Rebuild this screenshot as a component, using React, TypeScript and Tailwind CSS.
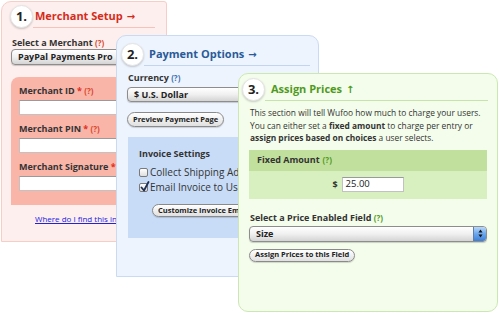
import React from 'react';

function StepHeader({ n, title, arrow, titleClass, lineClass, gapClass }: { n: string; title: string; arrow: string; titleClass: string; lineClass: string; gapClass: string }) {
  return (
    <div className="flex items-start">
      <div className="w-[23px] h-[23px] shrink-0 rounded-full bg-white border border-[#e4e4e4] shadow-[0_1px_2px_rgba(0,0,0,0.18)] flex items-center justify-center text-[13px] font-bold text-[#222] leading-none z-[1]">
        {n}.
      </div>
      <div className={`flex-1 h-[23px] border-b flex items-center text-[11px] font-bold whitespace-nowrap ${gapClass} ${lineClass} ${titleClass}`}>
        {title}
        <span className="ml-[4px] font-['DejaVu_Sans',sans-serif] text-[10px]">{arrow}</span>
      </div>
    </div>
  );
}

function Select({ label, className }: { label: string; className: string }) {
  return (
    <div className={`flex items-center rounded-[4px] border border-[#8d8d8d] bg-linear-to-b from-white via-[#f0f0f0] to-[#d4d4d4] shadow-[0_1px_1px_rgba(0,0,0,0.18)] pl-[6px] text-[9px] font-bold text-[#222] whitespace-nowrap overflow-hidden ${className}`}>
      {label}
    </div>
  );
}

function Button({ label, className }: { label: string; className: string }) {
  return (
    <div className={`flex w-fit items-center rounded-full border border-[#8a8a8a] bg-linear-to-b from-white to-[#e0e0e0] px-[5px] text-[7.5px] font-bold text-[#222] whitespace-nowrap shadow-[0_1px_1px_rgba(0,0,0,0.15)] ${className}`}>
      {label}
    </div>
  );
}

function Input({ className }: { className: string }) {
  return <div className={`bg-white border border-[#c2c2c2] border-t-[#9a9a9a] ${className}`} />;
}

function Check({ checked }: { checked?: boolean }) {
  return (
    <span className="relative w-[9px] h-[9px] shrink-0 rounded-[2px] border border-[#7a7a7a] bg-linear-to-b from-white to-[#dedede]">
      {checked && (
        <svg className="absolute left-[0px] top-[-3px]" width="10" height="11" viewBox="0 0 10 11">
          <path d="M1.5 6.5 L4 9.5 L8.5 1" fill="none" stroke="#1f2f55" strokeWidth="1.8" strokeLinecap="round" strokeLinejoin="round" />
        </svg>
      )}
    </span>
  );
}

export default function App() {
  return (
    <div className="relative w-[499px] h-[313px] overflow-hidden bg-white font-['Open_Sans',sans-serif] text-[#333]">
      {/* 1. Merchant Setup */}
      <div className="absolute left-[1px] top-[1px] w-[166px] h-[241px] rounded-tl-[10px] rounded-tr-[3px] border border-[#f8cdc6] bg-[#fdefed]">
        <div className="ml-[8px] mr-[11px] mt-[3px]">
          <StepHeader n="1" title="Merchant Setup" arrow="→" titleClass="text-[#d42c1c]" lineClass="border-[#f5c3ba]" gapClass="pl-[2px]" />
        </div>
        <div className="px-[9px]">
          <p className="mt-[9px] pl-[1px] h-[11px] leading-[11px] text-[9px] font-bold text-[#333] whitespace-nowrap">
            Select a Merchant <span className="text-[#d8472b] text-[8px]">(?)</span>
          </p>
          <Select label="PayPal Payments Pro" className="mt-[1px] h-[16px] w-[160px]" />
          <div className="mt-[12px] w-[147px] h-[128px] rounded-tl-[8px] bg-[#fab5a9] pl-[8px] pt-[8px]">
            <p className="h-[11px] leading-[11px] text-[9px] font-bold whitespace-nowrap">
              Merchant ID <span className="text-[#e0301e]">*</span> <span className="text-[#d8472b] text-[8px]">(?)</span>
            </p>
            <Input className="mt-[4px] h-[15px] w-[150px]" />
            <p className="mt-[8px] h-[11px] leading-[11px] text-[9px] font-bold whitespace-nowrap">
              Merchant PIN <span className="text-[#e0301e]">*</span> <span className="text-[#d8472b] text-[8px]">(?)</span>
            </p>
            <Input className="mt-[4px] h-[15px] w-[150px]" />
            <p className="mt-[8px] h-[11px] leading-[11px] text-[9px] font-bold whitespace-nowrap">
              Merchant Signature <span className="text-[#e0301e]">*</span> <span className="text-[#d8472b] text-[8px]">(?)</span>
            </p>
            <Input className="mt-[4px] h-[15px] w-[150px]" />
          </div>
          <p className="mt-[8px] ml-[24px] h-[11px] leading-[11px] text-[8px] text-[#2222dd] underline whitespace-nowrap">
            Where do I find this information?
          </p>
        </div>
      </div>

      {/* 2. Payment Options */}
      <div className="absolute left-[116px] top-[35px] w-[203px] h-[242px] rounded-tl-[10px] rounded-tr-[10px] border border-[#c9daf2] bg-[#edf4fe]">
        <div className="ml-[4px] mr-[8px] mt-[7px]">
          <StepHeader n="2" title="Payment Options" arrow="→" titleClass="text-[#2a5a98]" lineClass="border-[#c3d4ee]" gapClass="pl-[5px]" />
        </div>
        <div className="px-[10px]">
          <p className="mt-[6px] pl-[1px] h-[11px] leading-[11px] text-[9px] font-bold whitespace-nowrap">
            Currency <span className="text-[#3a6fb0] text-[8px]">(?)</span>
          </p>
          <Select label="$ U.S. Dollar" className="mt-[4px] h-[15px] w-[150px]" />
          <Button label="Preview Payment Page" className="mt-[10px] h-[15px]" />
          <div className="mt-[10px] ml-[1px] w-[180px] h-[101px] bg-[#c8dcf7] pl-[11px] pt-[11px]">
            <p className="h-[11px] leading-[11px] text-[9px] font-bold whitespace-nowrap">Invoice Settings</p>
            <div className="mt-[7px] flex items-center gap-[2px] h-[12px] text-[10px] whitespace-nowrap">
              <Check />
              <span>Collect Shipping Address</span>
            </div>
            <div className="mt-[3px] flex items-center gap-[2px] h-[12px] text-[10px] whitespace-nowrap">
              <Check checked />
              <span>Email Invoice to User</span>
            </div>
            <Button label="Customize Invoice Email" className="mt-[11px] ml-[13px] h-[13px]" />
          </div>
        </div>
      </div>

      {/* 3. Assign Prices */}
      <div className="absolute left-[238px] top-[73px] w-[260px] h-[239px] rounded-[10px] border border-[#cce8b2] bg-[#f4fdeb]">
        <div className="ml-[3px] mr-[9px] mt-[4px]">
          <StepHeader n="3" title="Assign Prices" arrow="↑" titleClass="text-[#4f9a1e]" lineClass="border-[#c6e3ab]" gapClass="pl-[6px]" />
        </div>
        <div className="px-[10px]">
          <p className="mt-[6px] pl-[1px] text-[8.4px] leading-[12.5px] text-[#333] whitespace-nowrap">
            This section will tell Wufoo how much to charge your users.
            <br />
            You can either set a <b>fixed amount</b> to charge per entry or
            <br />
            <b>assign prices based on choices</b> a user selects.
          </p>
          <div className="mt-[5px] w-[238px]">
            <div className="h-[21px] bg-[#c2e09d] pl-[8px] flex items-center text-[9px] font-bold whitespace-nowrap">
              Fixed Amount <span className="ml-[3px] text-[#4f9a1e] text-[8px]">(?)</span>
            </div>
            <div className="h-[28px] bg-[#d8efc0] flex items-center justify-center gap-[4px] text-[9px] font-bold">
              <span>$</span>
              <div className="w-[62px] h-[15px] bg-white border border-[#c2c2c2] border-t-[#9a9a9a] pl-[3px] flex items-center font-normal text-[9.5px] text-[#222]">25.00</div>
            </div>
          </div>
          <p className="mt-[13px] pl-[1px] h-[11px] leading-[11px] text-[9px] font-bold whitespace-nowrap">
            Select a Price Enabled Field <span className="text-[#4f9a1e] text-[8px]">(?)</span>
          </p>
          <div className="relative mt-[3px] w-[238px] h-[16px] flex items-center rounded-[4px] border border-[#8d8d8d] bg-linear-to-b from-white via-[#f0f0f0] to-[#d4d4d4] shadow-[0_1px_1px_rgba(0,0,0,0.18)] pl-[6px] text-[9px] font-bold text-[#222] overflow-hidden">
            Size
            <div className="absolute right-0 top-0 bottom-0 w-[13px] rounded-r-[3px] border-l border-[#5a7fb0] bg-linear-to-b from-[#b8d8fa] via-[#6aa6ec] to-[#3b7fd6] flex items-center justify-center">
              <svg width="5" height="9" viewBox="0 0 5 9">
                <path d="M2.5 0.5 L4.5 3.5 L0.5 3.5 Z" fill="#111" />
                <path d="M2.5 8.5 L4.5 5.5 L0.5 5.5 Z" fill="#111" />
              </svg>
            </div>
          </div>
          <Button label="Assign Prices to this Field" className="mt-[7px] h-[13px]" />
        </div>
      </div>
    </div>
  );
}
